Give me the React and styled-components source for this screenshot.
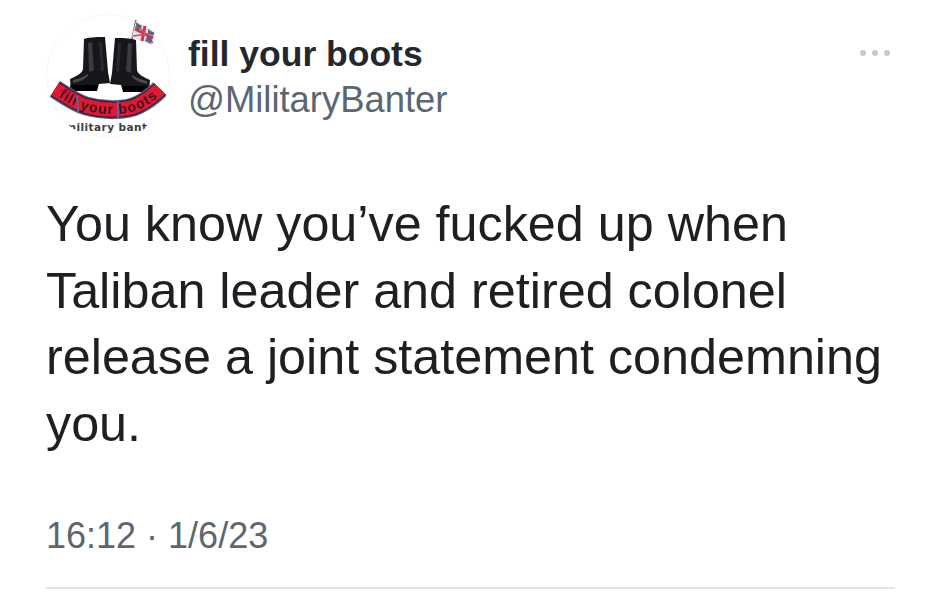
import React from "react";
import styled, { createGlobalStyle } from "styled-components";

const GlobalStyle = createGlobalStyle`
  html, body {
    margin: 0;
    background: #fff;
  }
`;

const Tweet = styled.main`
  box-sizing: border-box;
  width: 941px;
  height: 600px;
  padding: 14px 46px 0;
  background: #fff;
  font-family: "Liberation Sans", Arial, sans-serif;
  overflow: hidden;
`;

const Header = styled.header`
  display: flex;
  align-items: flex-start;
  gap: 18px;
`;

const Avatar = styled.svg`
  display: block;
  flex: none;
  width: 124px;
  height: 124px;
`;

const Names = styled.div`
  flex: 1;
  padding-top: 19px;
`;

const DisplayName = styled.div`
  font-size: 35.5px;
  line-height: 42px;
  font-weight: 700;
  color: #24272b;
`;

const Handle = styled.div`
  margin-top: 4px;
  font-size: 36.4px;
  line-height: 42px;
  color: #5b6671;
`;

const More = styled.div`
  display: flex;
  gap: 6px;
  margin: 36px 5px 0 0;
`;

const Dot = styled.span`
  width: 6px;
  height: 6px;
  border-radius: 50%;
  background: #c6c9cc;
`;

const Body = styled.p`
  margin: 53px 0 0;
  font-size: 50.3px;
  line-height: 66.5px;
  color: #1d1f22;
  white-space: nowrap;
`;

const Meta = styled.div`
  margin-top: 58px;
  font-size: 36px;
  line-height: 42px;
  color: #5c6670;
`;

const Rule = styled.hr`
  width: 849px;
  height: 2px;
  margin: 30px 0 0;
  border: 0;
  background: #e4e5e6;
`;

const BANNER = "M55 89 C66 96 76 103 86 106 C104 111 126 111 138 105 C148 100 154 95 160 89";

function Boot({ flip }) {
  return (
    <g transform={flip ? "translate(220 1) scale(-1 1)" : undefined}>
      <path
        d="M84 39 C90 37 100 37 105 37 L107 60 L108 72 L110 83 L99 84 L97 90 L71 90 L70 79 C76 76 82 74 83 69 Z"
        fill="#17181a"
      />
      <path d="M88 43 L92 42 L94 70 L89 72 Z" fill="#393c3f" />
      <path d="M99 42 L102 42 L104 70 L101 72 Z" fill="#2a2c2f" />
      <path d="M73 80 C78 79 84 77 88 74 L88 76 C84 80 78 82 73 83 Z" fill="#484b4e" />
      <path d="M70 85 L98 85 L97 91 L71 91 Z" fill="#050505" />
    </g>
  );
}

function Logo() {
  return (
    <Avatar viewBox="46 14 124 124" role="img" aria-label="fill your boots logo">
      <defs>
        <clipPath id="avatar-clip">
          <circle cx="109" cy="76" r="63.5" />
        </clipPath>
        <filter id="soft" x="-5%" y="-5%" width="110%" height="110%">
          <feGaussianBlur stdDeviation="0.5" />
        </filter>
      </defs>
      <circle cx="108" cy="76" r="61.5" fill="#fff" stroke="#f8f8f8" />
      <g filter="url(#soft)">
        <Boot />
        <Boot flip />
        <path d="M132 39 L136 20" stroke="#6d6a78" strokeWidth="1.6" />
        <path d="M136 21 L155 32 L152 45 L132 37 Z" fill="#e9dfe4" />
        <path d="M135 29 L153 38 M145 26 L142 41" stroke="#c8344c" strokeWidth="3" />
        <path d="M136 23 L153 43 M154 33 L133 36" stroke="#cf5064" strokeWidth="1.4" />
        <path d="M137 23 L142 26 L139 30 L135 28 Z M147 36 L152 39 L151 44 L145 41 Z M148 29 L154 33 L153 36 L148 33 Z" fill="#4a4f7c" opacity="0.8" />
        <path id="banner" d={BANNER} fill="none" stroke="#6a5a7a" strokeWidth="19" strokeLinejoin="round" />
        <path d={BANNER} fill="none" stroke="#2c2440" strokeWidth="16.5" />
        <path d={BANNER} fill="none" stroke="#d81c34" strokeWidth="14" />
        <text fontFamily="Liberation Sans, sans-serif" fontSize="14" fontWeight="700" fill="#4a0c22" textAnchor="middle" dy="4.5">
          <textPath href="#banner" startOffset="50%" textLength="102">
            fill your boots
          </textPath>
        </text>
        <path d="M77 96 L78 112 M118 101 L118 118" stroke="#5a6a9e" strokeWidth="1.8" />
      </g>
      <text
        x="65"
        y="131"
        clipPath="url(#avatar-clip)"
        fontFamily="DejaVu Sans, sans-serif"
        fontSize="10.5"
        fontWeight="700"
        fill="#3c3e42"
        textLength="82"
      >
        military bant
      </text>
    </Avatar>
  );
}

export default function App() {
  return (
    <>
      <GlobalStyle />
      <Tweet>
        <Header>
          <Logo />
          <Names>
            <DisplayName>fill your boots</DisplayName>
            <Handle>@MilitaryBanter</Handle>
          </Names>
          <More>
            <Dot />
            <Dot />
            <Dot />
          </More>
        </Header>
        <Body>
          You know you’ve fucked up when
          <br />
          Taliban leader and retired colonel
          <br />
          release a joint statement condemning
          <br />
          you.
        </Body>
        <Meta>16:12 · 1/6/23</Meta>
        <Rule />
      </Tweet>
    </>
  );
}
